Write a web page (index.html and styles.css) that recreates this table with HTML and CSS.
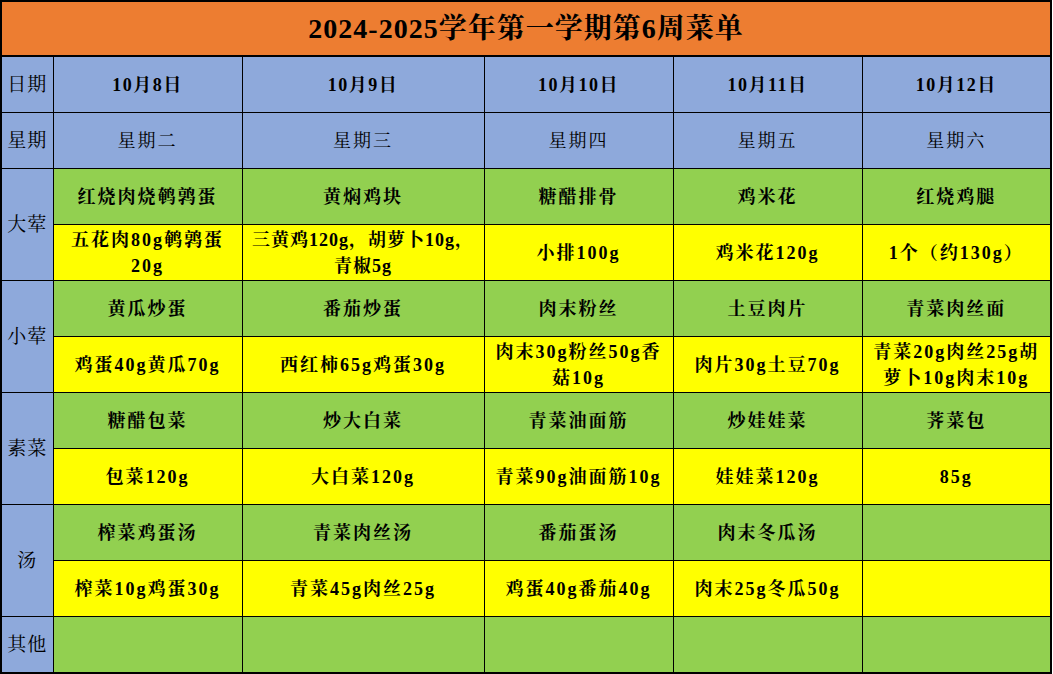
FILE: index.html
```html
<!DOCTYPE html>
<html lang="zh-CN">
<head>
<meta charset="utf-8">
<title>菜单</title>
<link rel="stylesheet" href="styles.css">
</head>
<body>
<table class="menu">
  <colgroup>
    <col class="c-label">
    <col class="c-day">
    <col class="c-wide">
    <col class="c-day">
    <col class="c-day">
    <col class="c-day">
  </colgroup>
  <tr class="title-row"><td colspan="6" class="title">2024-2025学年第一学期第6周菜单</td></tr>
  <tr class="row blue">
    <td class="label">日期</td>
    <td class="date">10月8日</td><td class="date">10月9日</td><td class="date">10月10日</td><td class="date">10月11日</td><td class="date">10月12日</td>
  </tr>
  <tr class="row blue">
    <td class="label">星期</td>
    <td class="week">星期二</td><td class="week">星期三</td><td class="week">星期四</td><td class="week">星期五</td><td class="week">星期六</td>
  </tr>
  <tr class="row green">
    <td class="label blue-cell" rowspan="2">大荤</td>
    <td>红烧肉烧鹌鹑蛋</td><td>黄焖鸡块</td><td>糖醋排骨</td><td>鸡米花</td><td>红烧鸡腿</td>
  </tr>
  <tr class="row yellow">
    <td>五花肉80g鹌鹑蛋<br>20g</td><td class="tight">三黄鸡120g，胡萝卜10g，<br>青椒5g</td><td>小排100g</td><td>鸡米花120g</td><td>1个（约130g）</td>
  </tr>
  <tr class="row green">
    <td class="label blue-cell" rowspan="2">小荤</td>
    <td>黄瓜炒蛋</td><td>番茄炒蛋</td><td>肉末粉丝</td><td>土豆肉片</td><td>青菜肉丝面</td>
  </tr>
  <tr class="row yellow">
    <td>鸡蛋40g黄瓜70g</td><td>西红柿65g鸡蛋30g</td><td>肉末30g粉丝50g香<br>菇10g</td><td>肉片30g土豆70g</td><td>青菜20g肉丝25g胡<br>萝卜10g肉末10g</td>
  </tr>
  <tr class="row green">
    <td class="label blue-cell" rowspan="2">素菜</td>
    <td>糖醋包菜</td><td>炒大白菜</td><td>青菜油面筋</td><td>炒娃娃菜</td><td>荠菜包</td>
  </tr>
  <tr class="row yellow">
    <td>包菜120g</td><td>大白菜120g</td><td>青菜90g油面筋10g</td><td>娃娃菜120g</td><td>85g</td>
  </tr>
  <tr class="row green">
    <td class="label blue-cell" rowspan="2">汤</td>
    <td>榨菜鸡蛋汤</td><td>青菜肉丝汤</td><td>番茄蛋汤</td><td>肉末冬瓜汤</td><td></td>
  </tr>
  <tr class="row yellow">
    <td>榨菜10g鸡蛋30g</td><td>青菜45g肉丝25g</td><td>鸡蛋40g番茄40g</td><td>肉末25g冬瓜50g</td><td></td>
  </tr>
  <tr class="row green">
    <td class="label blue-cell">其他</td>
    <td></td><td></td><td></td><td></td><td></td>
  </tr>
</table>
</body>
</html>
```

FILE: styles.css
```css
html, body {
  margin: 0;
  padding: 0;
  background: #ffffff;
}

.menu {
  border-collapse: collapse;
  table-layout: fixed;
  width: 1051px;
  font-family: "Liberation Serif", "Noto Serif CJK SC", "Noto Sans CJK SC", serif;
  color: #000;
}

.c-label { width: 52px; }
.c-day { width: 189px; }
.c-wide { width: 242px; }

.menu td {
  border: 1px solid #000;
  padding: 0 2px;
  text-align: center;
  vertical-align: middle;
  font-size: 18px;
  font-weight: bold;
  line-height: 26px;
  letter-spacing: 2px;
  overflow: hidden;
}

.title-row td.title {
  height: 53px;
  background: #ED7D31;
  border: 2px solid #000;
  font-size: 28px;
  letter-spacing: 1px;
  font-weight: bold;
}

.row td { height: 55px; }

.blue td, .blue-cell { background: #8EA9DB; }
.green td { background: #92D050; }
.yellow td { background: #FFFF00; }
.green td.blue-cell { background: #8EA9DB; }

.menu td.label {
  font-weight: normal;
  font-size: 19px;
  letter-spacing: 1px;
  padding: 0;
  border-left: 2px solid #000;
}

.menu td.date { letter-spacing: 1.5px; }
.menu td.week { font-weight: normal; }
.menu td.tight { letter-spacing: 1px; }

.menu tr td:last-child { border-right: 2px solid #000; }
.menu tr:last-child td { border-bottom: 2px solid #000; }
```
